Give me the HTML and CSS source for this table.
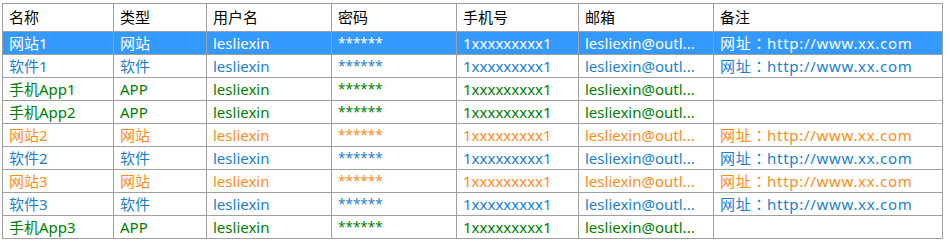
FILE: index.html
```html
<!DOCTYPE html>
<html lang="zh-CN">
<head>
<meta charset="utf-8">
<title>账号列表</title>
<link rel="stylesheet" href="styles.css">
</head>
<body>
<table class="grid">
  <colgroup>
    <col class="c-name"><col class="c-type"><col class="c-user"><col class="c-pwd"><col class="c-phone"><col class="c-mail"><col class="c-note">
  </colgroup>
  <thead>
    <tr><th>名称</th><th>类型</th><th>用户名</th><th>密码</th><th>手机号</th><th>邮箱</th><th>备注</th></tr>
  </thead>
  <tbody>
    <tr class="selected"><td>网站1</td><td>网站</td><td>lesliexin</td><td class="pwd">******</td><td>1xxxxxxxxx1</td><td>lesliexin@outl...</td><td class="note">网址：http://www.xx.com</td></tr>
    <tr class="soft"><td>软件1</td><td>软件</td><td>lesliexin</td><td class="pwd">******</td><td>1xxxxxxxxx1</td><td>lesliexin@outl...</td><td class="note">网址：http://www.xx.com</td></tr>
    <tr class="app"><td>手机App1</td><td>APP</td><td>lesliexin</td><td class="pwd">******</td><td>1xxxxxxxxx1</td><td>lesliexin@outl...</td><td class="note"></td></tr>
    <tr class="app"><td>手机App2</td><td>APP</td><td>lesliexin</td><td class="pwd">******</td><td>1xxxxxxxxx1</td><td>lesliexin@outl...</td><td class="note"></td></tr>
    <tr class="web"><td>网站2</td><td>网站</td><td>lesliexin</td><td class="pwd">******</td><td>1xxxxxxxxx1</td><td>lesliexin@outl...</td><td class="note">网址：http://www.xx.com</td></tr>
    <tr class="soft"><td>软件2</td><td>软件</td><td>lesliexin</td><td class="pwd">******</td><td>1xxxxxxxxx1</td><td>lesliexin@outl...</td><td class="note">网址：http://www.xx.com</td></tr>
    <tr class="web"><td>网站3</td><td>网站</td><td>lesliexin</td><td class="pwd">******</td><td>1xxxxxxxxx1</td><td>lesliexin@outl...</td><td class="note">网址：http://www.xx.com</td></tr>
    <tr class="soft"><td>软件3</td><td>软件</td><td>lesliexin</td><td class="pwd">******</td><td>1xxxxxxxxx1</td><td>lesliexin@outl...</td><td class="note">网址：http://www.xx.com</td></tr>
    <tr class="app"><td>手机App3</td><td>APP</td><td>lesliexin</td><td class="pwd">******</td><td>1xxxxxxxxx1</td><td>lesliexin@outl...</td><td class="note"></td></tr>
  </tbody>
</table>
</body>
</html>
```
FILE: styles.css
```css
html, body {
  margin: 0;
  background: #fff;
}
body {
  padding: 3px 0 0 2px;
  font-family: "Noto Sans", "Noto Sans CJK SC", sans-serif;
  font-size: 15px;
}
.grid {
  border-collapse: collapse;
  table-layout: fixed;
  width: 941px;
}
.c-name { width: 111px; }
.c-type { width: 93px; }
.c-user { width: 125px; }
.c-pwd { width: 125px; }
.c-phone { width: 122px; }
.c-mail { width: 135px; }
.c-note { width: 229px; }
.grid th, .grid td {
  border: 1px solid #a0a0a0;
  padding: 0 0 0 6px;
  text-align: left;
  white-space: nowrap;
  overflow: hidden;
}
.grid th {
  font-weight: normal;
  color: #000;
  height: 27px;
  line-height: 27px;
}
.grid td {
  height: 22px;
  line-height: 22px;
}
.grid td.pwd {
  font-size: 13.5px;
}
.grid td.note {
  font-family: "Noto Sans", "Noto Sans CJK TC", sans-serif;
  font-feature-settings: "locl" 0;
  letter-spacing: 0.7px;
}
.selected td { background: #3399ff; color: #fff; }
.soft td { color: #1a7fcf; }
.app td { color: #008000; }
.web td { color: #ff8c1a; }
```
